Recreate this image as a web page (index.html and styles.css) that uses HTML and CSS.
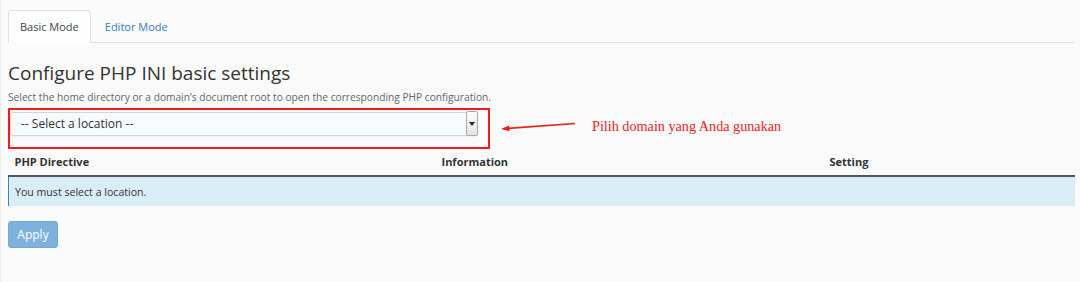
FILE: index.html
```html
<!DOCTYPE html>
<html lang="en">
<head>
  <meta charset="UTF-8" />
  <title>MultiPHP INI Editor</title>
  <link rel="stylesheet" href="styles.css">
</head>
<body>
  <div class="page">
    <ul class="tabs">
      <li class="tab active">Basic Mode</li>
      <li class="tab"><a href="#">Editor Mode</a></li>
    </ul>

    <h1>Configure PHP INI basic settings</h1>
    <p class="desc">Select the home directory or a domain’s document root to open the corresponding PHP configuration.</p>

    <div class="location-row">
      <div class="highlight">
        <div class="select-wrap">
          <select id="location">
            <option value="">-- Select a location --</option>
          </select>
          <span class="select-btn">
            <svg width="6" height="4" viewBox="0 0 6 4"><path d="M0 0h6L3 4z" fill="#222"/></svg>
          </span>
        </div>
      </div>
      <svg class="pointer" width="76" height="10" viewBox="0 0 76 10">
        <path d="M6 6.5 L74 1.5" stroke="#f21b1b" stroke-width="1.6" fill="none"/>
        <path d="M0 7 L8 3.6 L8.6 9.2 z" fill="#f21b1b"/>
      </svg>
      <span class="note">Pilih domain yang Anda gunakan</span>
    </div>

    <table class="directives">
      <thead>
        <tr>
          <th class="col-name">PHP Directive</th>
          <th class="col-info">Information</th>
          <th class="col-set">Setting</th>
        </tr>
      </thead>
      <tbody>
        <tr class="info-row">
          <td colspan="3">You must select a location.</td>
        </tr>
      </tbody>
    </table>

    <button class="btn-apply" disabled>Apply</button>
  </div>
</body>
</html>
```

FILE: styles.css
```css
html, body {
  margin: 0;
  padding: 0;
  background: #fafafa;
}
body {
  font-family: "Open Sans", sans-serif;
  color: #333;
  height: 282px;
  border-left: 1px dotted #e2e2e2;
  box-sizing: border-box;
}
.page {
  padding: 10px 6px 0 7px;
}
.tabs {
  list-style: none;
  margin: 0;
  padding: 0;
  display: flex;
  border-bottom: 1px solid #e1e1e1;
  height: 32px;
}
.tab {
  font-size: 11px;
  padding: 0 11px;
  line-height: 31px;
  margin-right: 2px;
  border: 1px solid transparent;
  border-radius: 4px 4px 0 0;
}
.tab.active {
  background: #fcfeff;
  border-color: #e1e1e1;
  border-bottom-color: #fcfeff;
  color: #444;
  height: 31px;
}
.tab a {
  color: #2f7fc3;
  text-decoration: none;
}
h1 {
  font-size: 19px;
  font-weight: 400;
  margin: 16px 0 0;
  line-height: 28px;
  color: #333;
}
.desc {
  font-size: 10.2px;
  color: #666;
  margin: 2px 0 0;
  line-height: 16px;
}
.location-row {
  display: flex;
  align-items: flex-start;
  margin-top: 3px;
}
.highlight {
  width: 478px;
  height: 36px;
  border: 2px solid #f01c1c;
  padding: 1px 0 0 0;
}
.select-wrap {
  position: relative;
  width: 468px;
  height: 24px;
}
.select-wrap select {
  appearance: none;
  -webkit-appearance: none;
  width: 100%;
  height: 24px;
  border: 1px solid #d4d4d4;
  border-radius: 3px;
  background: #f6fcfe;
  font-family: "Open Sans", sans-serif;
  font-size: 12px;
  color: #333;
  padding: 0 10px;
  box-shadow: 0 1px 1px rgba(0,0,0,0.05);
}
.select-btn {
  position: absolute;
  right: 0;
  top: 0;
  width: 10px;
  height: 23px;
  border: 1px solid #aaa;
  border-radius: 2px;
  background: linear-gradient(#fdfdfd, #e4e4e4);
  display: flex;
  align-items: center;
  justify-content: center;
}
.pointer {
  margin: 14px 0 0 11px;
}
.note {
  font-family: "Liberation Serif", serif;
  font-size: 14.2px;
  color: #f21b1b;
  margin: 10px 0 0 15px;
}
.directives {
  width: 1067px;
  border-collapse: collapse;
  margin-top: 0;
}
.directives th {
  font-size: 11px;
  font-weight: 700;
  text-align: left;
  padding: 5px 6px 6px;
  border-bottom: 2px solid #555;
  color: #333;
}
.col-name { width: 415px; }
.col-info { width: 376px; }
.info-row td {
  background: #d9edf7;
  border-left: 1px solid #3b82b8;
  font-size: 10.6px;
  padding: 7px 6px 6px;
  height: 16px;
}
.btn-apply {
  margin-top: 15px;
  width: 50px;
  height: 27px;
  background: #7fb1de;
  border: 1px solid #73a7d6;
  border-radius: 3px;
  color: #fff;
  font-family: "Open Sans", sans-serif;
  font-size: 12px;
  padding: 0;
}
```
